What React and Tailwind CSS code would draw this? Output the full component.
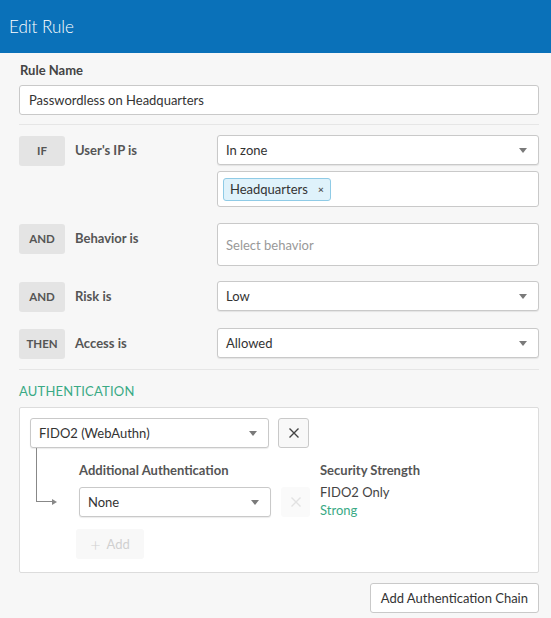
import React from 'react';

const Caret = () => (
  <span className="ml-auto w-0 h-0 border-l-[4px] border-r-[4px] border-t-[5px] border-l-transparent border-r-transparent border-t-[#7a7a7a]" />
);

const Select = ({ value, className = '' }) => (
  <div className={`flex items-center h-[30px] pl-[8px] pr-[11px] bg-white border border-[#c9c9c9] rounded-[3px] shadow-[0_1px_1px_rgba(0,0,0,0.08)] text-[13px] leading-[16px] text-[#333] ${className}`}>
    <span>{value}</span>
    <Caret />
  </div>
);

const Badge = ({ children }) => (
  <div className="mt-[1px] w-[46px] h-[30px] flex items-center justify-center bg-[#e4e4e4] rounded-[3px] text-[11.5px] leading-[14px] font-bold text-[#555]">
    {children}
  </div>
);

const XIcon = ({ color = '#444' }) => (
  <svg width="12" height="12" viewBox="0 0 12 12" fill="none" stroke={color} strokeWidth="1.4">
    <path d="M1.5 1.5 L10.5 10.5 M10.5 1.5 L1.5 10.5" />
  </svg>
);

const ConditionRow = ({ op, label, children, className = '' }) => (
  <div className={`flex items-start ${className}`}>
    <Badge>{op}</Badge>
    <div className="w-[152px] pl-[10px] pt-[7px] text-[13px] leading-[16px] font-bold text-[#555]">{label}</div>
    <div className="flex-1">{children}</div>
  </div>
);

export default function App() {
  return (
    <div className="w-[551px] h-[618px] bg-[#f7f7f7] overflow-hidden" style={{ fontFamily: 'Lato, "Open Sans", sans-serif' }}>
      <div className="h-[53px] bg-[#0a71b9] flex items-center px-[9px]">
        <h1 className="text-white text-[17px] leading-[20px] font-light">Edit Rule</h1>
      </div>

      <div className="px-[19px] pr-[12px]">
        <div className="pt-[9px] pl-[1px] text-[13px] leading-[16px] font-bold text-[#444]">Rule Name</div>
        <div className="mt-[7px] h-[30px] flex items-center px-[9px] bg-white border border-[#c9c9c9] rounded-[3px] text-[13px] leading-[16px] text-[#333]">
          Passwordless on Headquarters
        </div>

        <div className="mt-[9px] border-t border-[#e6e6e6]" />

        <ConditionRow op="IF" label="User's IP is" className="mt-[10px]">
          <Select value="In zone" />
          <div className="mt-[6px] h-[36px] flex items-center px-[5px] bg-white border border-[#c9c9c9] rounded-[3px]">
            <div className="h-[23px] flex items-center gap-[10px] px-[6px] bg-[#dff2fb] border border-[#8fcbe6] rounded-[3px] text-[13px] leading-[16px] text-[#333]">
              <span>Headquarters</span>
              <span className="text-[10px] font-bold text-[#555]">×</span>
            </div>
          </div>
        </ConditionRow>

        <ConditionRow op="AND" label="Behavior is" className="mt-[16px]">
          <div className="h-[43px] flex items-center px-[8px] bg-white border border-[#c9c9c9] rounded-[3px] text-[13px] leading-[16px] text-[#999]">
            Select behavior
          </div>
        </ConditionRow>

        <ConditionRow op="AND" label="Risk is" className="mt-[15px]">
          <Select value="Low" />
        </ConditionRow>

        <ConditionRow op="THEN" label="Access is" className="mt-[16px]">
          <Select value="Allowed" />
        </ConditionRow>

        <div className="mt-[10px] border-t border-[#e6e6e6]" />

        <div className="mt-[13px] text-[13px] leading-[16px] text-[#3aaa85] tracking-[0.2px]">AUTHENTICATION</div>

        <div className="mt-[8px] h-[166px] bg-white border border-[#dcdcdc] rounded-[2px] px-[10px] pt-[10px]">
          <div className="flex items-center gap-[9px]">
            <Select value="FIDO2 (WebAuthn)" className="w-[239px]" />
            <button className="w-[31px] h-[30px] flex items-center justify-center bg-[#f8f8f8] border border-[#c9c9c9] rounded-[3px]">
              <XIcon />
            </button>
          </div>

          <div className="flex">
            <div className="w-[49px] relative">
              <div className="absolute left-[6px] top-0 w-[16px] h-[54px] border-l border-b border-[#888]" />
              <div className="absolute left-[22px] top-[51px] w-0 h-0 border-t-[3px] border-b-[3px] border-l-[5px] border-t-transparent border-b-transparent border-l-[#888]" />
            </div>
            <div className="w-[193px]">
              <div className="pt-[14px] text-[13px] leading-[16px] font-bold text-[#555]">Additional Authentication</div>
              <Select value="None" className="mt-[9px] w-[192px]" />
              <div className="mt-[12px] ml-[-3px] w-[68px] h-[30px] flex items-center justify-center gap-[6px] bg-[#f8f8f8] rounded-[3px] text-[13px] leading-[16px] text-[#d0d0d0]">
                <span className="text-[18px] font-light leading-none">+</span>
                <span>Add</span>
              </div>
            </div>
            <div className="w-[48px] pt-[39px] pl-[9px]">
              <div className="w-[29px] h-[30px] flex items-center justify-center bg-[#fafafa] rounded-[3px]">
                <XIcon color="#e2e2e2" />
              </div>
            </div>
            <div className="pt-[14px] text-[13px] leading-[16px]">
              <div className="font-bold text-[#555]">Security Strength</div>
              <div className="mt-[6px] text-[#444]">FIDO2 Only</div>
              <div className="mt-[2px] text-[#3aaa85]">Strong</div>
            </div>
          </div>
        </div>

        <div className="flex justify-end mt-[10px]">
          <button className="h-[30px] px-[10px] bg-white border border-[#c9c9c9] rounded-[3px] text-[13px] leading-[16px] text-[#333]">
            Add Authentication Chain
          </button>
        </div>
      </div>
    </div>
  );
}
